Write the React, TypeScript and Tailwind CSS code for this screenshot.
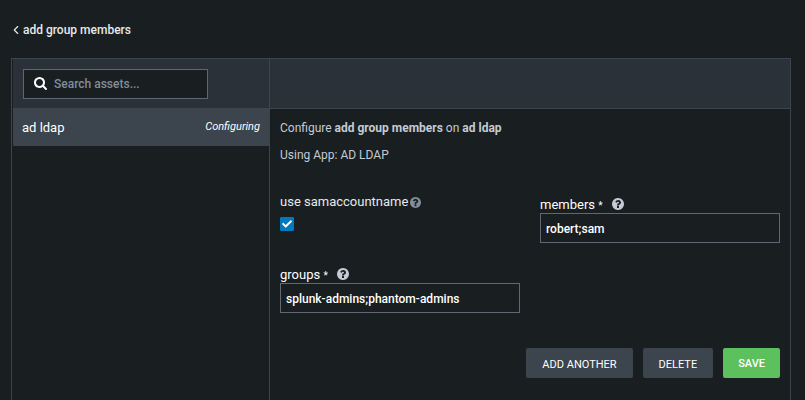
import { useState } from "react";
import { FaCheck } from "react-icons/fa";
import { ChevronLeft } from "lucide-react";

function SearchIcon({ className }: { className: string }) {
  return (
    <svg viewBox="64 128 1664 1664" fill="currentColor" aria-hidden="true" className={className}>
      <path d="M1216 832q0-185-131.5-316.5T768 384 451.5 515.5 320 832t131.5 316.5T768 1280t316.5-131.5T1216 832zm512 832q0 52-38 90t-90 38q-54 0-90-38l-343-342q-179 124-399 124-143 0-273.5-55.5t-225-150-150-225T64 832t55.5-273.5 150-225 225-150T768 128t273.5 55.5 225 150 150 225T1472 832q0 220-124 399l343 343q37 37 37 90z" />
    </svg>
  );
}

function HelpIcon({ className }: { className: string }) {
  return (
    <svg viewBox="128 128 1536 1536" fill="currentColor" aria-hidden="true" className={className}>
      <path d="M1024 1376v-192q0-14-9-23t-23-9H800q-14 0-23 9t-9 23v192q0 14 9 23t23 9h192q14 0 23-9t9-23zm256-672q0-88-55.5-163T1086 425t-170-41q-243 0-371 213-15 24 8 42l132 100q7 6 19 6 16 0 25-12 53-68 86-92 34-24 86-24 48 0 85.5 26t37.5 59q0 38-20 61t-68 45q-63 28-115.5 86.5T768 1020v36q0 14 9 23t23 9h192q14 0 23-9t9-23q0-19 21.5-49.5T1100 957q32-18 49-28.5t46-35 44.5-48 28-60.5 12.5-81zm384 192q0 209-103 385.5T1281.5 1561 896 1664t-385.5-103T231 1281.5 128 896t103-385.5T510.5 231 896 128t385.5 103T1561 510.5 1664 896z" />
    </svg>
  );
}

type TextFieldProps = {
  id: string;
  label: string;
  value: string;
  onChange: (value: string) => void;
};

function TextField({ id, label, value, onChange }: TextFieldProps) {
  return (
    <div className="pt-[3px]">
      <div className="flex h-[18px] items-center text-[13px] text-white">
        <label htmlFor={id} className="pt-0.5">
          {label} <span className="text-[10px]">*</span>
        </label>
        <HelpIcon className="ml-[9px] size-3 text-[#c3cbd4]" />
      </div>
      <input
        id={id}
        type="text"
        value={value}
        onChange={(e) => onChange(e.target.value)}
        className="h-[30px] w-full border border-[#626775] bg-transparent px-[5px] pt-px text-xs font-medium text-white outline-none"
      />
    </div>
  );
}

export default function App() {
  const [search, setSearch] = useState("");
  const [useSam, setUseSam] = useState(true);
  const [members, setMembers] = useState("robert;sam");
  const [groups, setGroups] = useState("splunk-admins;phantom-admins");

  return (
    <div className="flex min-h-screen flex-col bg-[#191e21] pr-3.5 pl-[11px] font-['Roboto',sans-serif] text-xs text-[#c3cbd4]">
      <header className="flex h-[58px] items-center pt-0.5">
        <a href="#" className="flex items-center text-xs font-medium text-[#e6e9ec]">
          <ChevronLeft className="-ml-0.5 size-3.5" strokeWidth={2} />
          <h1>add group members</h1>
        </a>
      </header>

      <main className="flex flex-1 border border-b-0 border-[#3c444d]">
        <aside className="w-[258px] shrink-0 border-r border-[#3c444d] pl-px">
          <div className="flex h-[49px] items-center bg-[#2b3138] px-2.5">
            <label className="flex h-[30px] w-[185px] items-center gap-[7px] border border-[#5c6773] bg-[#191e21] px-2.5">
              <SearchIcon className="size-[13px] shrink-0 text-white" />
              <input
                type="search"
                aria-label="Search assets"
                placeholder="Search assets..."
                value={search}
                onChange={(e) => setSearch(e.target.value)}
                className="w-full min-w-0 bg-transparent text-xs font-medium text-white outline-none placeholder:text-[#818d99]"
              />
            </label>
          </div>
          <button
            type="button"
            className="flex h-[38px] w-full items-center justify-between bg-[#3c444d] px-[9px] text-white"
          >
            <span className="pt-0.5 text-[13px]">ad ldap</span>
            <span className="text-[11px] italic">Configuring</span>
          </button>
        </aside>

        <section className="min-w-0 flex-1">
          <div className="h-[50px] border-b border-[#3c444d] bg-[#2b3138]" />
          <div className="px-2.5 pt-[11px]">
            <p className="leading-4">
              Configure <strong>add group members</strong> on <strong>ad ldap</strong>
            </p>
            <p className="mt-[11px] leading-4">Using App: AD LDAP</p>

            <form onSubmit={(e) => e.preventDefault()}>
              <div className="mt-[29px] grid grid-cols-2 gap-x-5 gap-y-[19px]">
                <div>
                  <div className="flex h-5 items-center text-[13px] text-[#e6e9ec]">
                    <label htmlFor="samaccountname">use samaccountname</label>
                    <HelpIcon className="ml-0.5 size-[11px] text-[#818d99]" />
                  </div>
                  <span className="mt-[5px] grid size-3.5 place-items-center">
                    <input
                      id="samaccountname"
                      type="checkbox"
                      checked={useSam}
                      onChange={(e) => setUseSam(e.target.checked)}
                      className="col-start-1 row-start-1 size-3.5 appearance-none rounded-[1px] border border-[#5c6773] checked:border-[#007abd] checked:bg-[#007abd]"
                    />
                    {useSam && (
                      <FaCheck className="pointer-events-none col-start-1 row-start-1 size-2.5 text-white" />
                    )}
                  </span>
                </div>
                <TextField id="members" label="members" value={members} onChange={setMembers} />
                <TextField id="groups" label="groups" value={groups} onChange={setGroups} />
              </div>

              <div className="mt-[35px] flex justify-end gap-2.5 text-[11px] text-white">
                <button type="button" className="h-[30px] rounded-xs bg-[#3c444d] px-4 pt-[5px]">
                  ADD ANOTHER
                </button>
                <button type="button" className="h-[30px] rounded-xs bg-[#3c444d] px-4 pt-[5px]">
                  DELETE
                </button>
                <button type="submit" className="h-[30px] rounded-xs bg-[#5cc05c] px-[15px] pt-[3px] font-medium">
                  SAVE
                </button>
              </div>
            </form>
          </div>
        </section>
      </main>
    </div>
  );
}
